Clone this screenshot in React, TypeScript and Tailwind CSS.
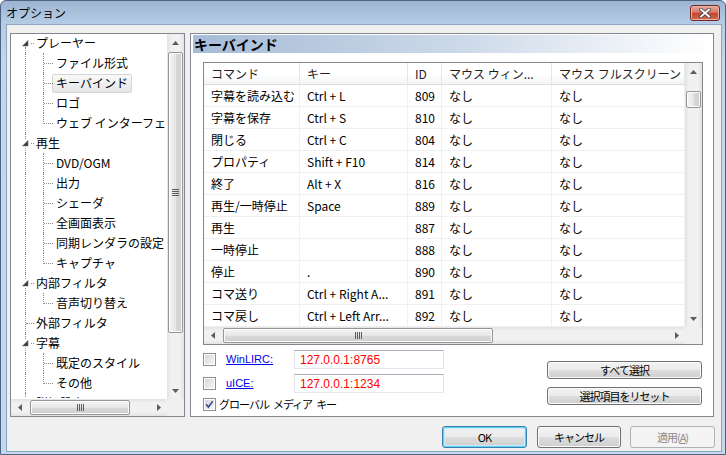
import React from "react";

const JP = "font-['Noto_Sans_CJK_JP','Noto_Sans',sans-serif]";
const GOTH = "text-[11px] tracking-[-1px]";

type Node = { t: string; lvl: 0 | 1; exp?: boolean; last?: boolean; sel?: boolean; first?: boolean };

const tree: Node[] = [
  { t: "プレーヤー", lvl: 0, exp: true, first: true },
  { t: "ファイル形式", lvl: 1 },
  { t: "キーバインド", lvl: 1, sel: true },
  { t: "ロゴ", lvl: 1 },
  { t: "ウェブ インターフェース", lvl: 1, last: true },
  { t: "再生", lvl: 0, exp: true },
  { t: "DVD/OGM", lvl: 1 },
  { t: "出力", lvl: 1 },
  { t: "シェーダ", lvl: 1 },
  { t: "全画面表示", lvl: 1 },
  { t: "同期レンダラの設定", lvl: 1 },
  { t: "キャプチャ", lvl: 1, last: true },
  { t: "内部フィルタ", lvl: 0, exp: true },
  { t: "音声切り替え", lvl: 1, last: true },
  { t: "外部フィルタ", lvl: 0 },
  { t: "字幕", lvl: 0, exp: true },
  { t: "既定のスタイル", lvl: 1 },
  { t: "その他", lvl: 1, last: true },
  { t: "詳細設定", lvl: 0 },
];

const rows: string[][] = [
  ["字幕を読み込む", "Ctrl + L", "809"],
  ["字幕を保存", "Ctrl + S", "810"],
  ["閉じる", "Ctrl + C", "804"],
  ["プロパティ", "Shift + F10", "814"],
  ["終了", "Alt + X", "816"],
  ["再生/一時停止", "Space", "889"],
  ["再生", "", "887"],
  ["一時停止", "", "888"],
  ["停止", ".", "890"],
  ["コマ送り", "Ctrl + Right A...", "891"],
  ["コマ戻し", "Ctrl + Left Arr...", "892"],
];

function Arrow({ dir }: { dir: "up" | "down" | "left" | "right" }) {
  const pts = {
    up: "0,4 3.5,0 7,4",
    down: "0,0 7,0 3.5,4",
    left: "4,0 4,7 0,3.5",
    right: "0,0 0,7 4,3.5",
  }[dir];
  const vert = dir === "up" || dir === "down";
  return (
    <div className="w-[17px] h-[17px] flex items-center justify-center shrink-0">
      <svg width={vert ? 7 : 4} height={vert ? 4 : 7}>
        <polygon points={pts} fill="#5c5c5c" />
      </svg>
    </div>
  );
}

function VGrip() {
  return (
    <div className="flex flex-col gap-[1px]">
      {[0, 1, 2, 3].map((i) => (
        <div key={i} className="w-[7px] h-[1px] bg-[#5a5a5a]" />
      ))}
    </div>
  );
}

function HGrip() {
  return (
    <div className="flex flex-row gap-[1px]">
      {[0, 1, 2, 3].map((i) => (
        <div key={i} className="w-[1px] h-[7px] bg-[#5a5a5a]" />
      ))}
    </div>
  );
}

const vTrack = "bg-[linear-gradient(to_right,#e3e3e3,#f1f1f1_25%,#f1f1f1_75%,#e3e3e3)]";
const hTrack = "bg-[linear-gradient(to_bottom,#e3e3e3,#f1f1f1_25%,#f1f1f1_75%,#e3e3e3)]";
const vThumb =
  "mx-[1px] rounded-[2px] border border-[#959595] bg-[linear-gradient(to_right,#f5f5f5,#e6e6e6_50%,#d9d9d9_51%,#cecece)] shadow-[inset_0_0_0_1px_#fbfbfb] flex items-center justify-center";
const hThumb =
  "my-[1px] rounded-[2px] border border-[#959595] bg-[linear-gradient(to_bottom,#f5f5f5,#e6e6e6_50%,#d9d9d9_51%,#cecece)] shadow-[inset_0_0_0_1px_#fbfbfb] flex items-center justify-center";

function TreeRow({ n }: { n: Node }) {
  const dot = "border-dotted border-[#8c8c8c]";
  return (
    <div className="relative h-[20px] flex items-center whitespace-nowrap shrink-0">
      <span
        className={`absolute left-[14px] w-0 border-l ${dot} ${n.first ? "top-[14px] bottom-0" : "top-0 bottom-0"}`}
      />
      {n.lvl === 1 && (
        <>
          <span className={`absolute left-[32px] w-0 border-l ${dot} top-0 ${n.last ? "h-[11px]" : "bottom-0"}`} />
          <span className={`absolute left-[33px] top-[10px] w-[9px] h-0 border-t ${dot}`} />
        </>
      )}
      {n.lvl === 0 && n.exp && (
        <>
          <span className="absolute left-[11px] top-[7px] w-[7px] h-[7px] bg-white flex">
            <svg width="7" height="7">
              <polygon points="6,0.5 6,6 0.5,6" fill="#3a3a3a" stroke="#6b6b6b" strokeWidth="0.6" />
            </svg>
          </span>
          <span className={`absolute left-[20px] top-[10px] w-[3px] h-0 border-t ${dot}`} />
        </>
      )}
      {n.lvl === 0 && !n.exp && <span className={`absolute left-[15px] top-[10px] w-[8px] h-0 border-t ${dot}`} />}
      {n.lvl === 0 ? (
        <span className="pl-[25px] text-[12px] leading-none">{n.t}</span>
      ) : n.sel ? (
        <span className="ml-[41px] px-[3px] h-[19px] flex items-center rounded-[2px] border border-[#d4d4d4] bg-[linear-gradient(to_bottom,#f9f9f9,#e6e6e6)] text-[12px] leading-none">
          {n.t}
        </span>
      ) : (
        <span className="pl-[45px] text-[12px] leading-none">{n.t}</span>
      )}
    </div>
  );
}

function Tree() {
  return (
    <div className="w-[175px] h-[384px] border border-[#828790] bg-white flex flex-col shrink-0">
      <div className="flex h-[365px]">
        <div className="w-[156px] h-[365px] overflow-hidden flex flex-col -mt-px">
          {tree.map((n, i) => (
            <TreeRow key={i} n={n} />
          ))}
        </div>
        <div className={`w-[17px] h-[365px] flex flex-col ${vTrack}`}>
          <Arrow dir="up" />
          <div className={`mt-[1px] h-[281px] ${vThumb}`}>
            <VGrip />
          </div>
          <div className="flex-1" />
          <Arrow dir="down" />
        </div>
      </div>
      <div className="flex h-[17px]">
        <div className={`w-[156px] h-[17px] flex flex-row ${hTrack}`}>
          <Arrow dir="left" />
          <div className={`ml-[2px] w-[100px] ${hThumb}`}>
            <HGrip />
          </div>
          <div className="flex-1" />
          <Arrow dir="right" />
        </div>
        <div className="w-[17px] h-[17px] bg-[#f0f0f0]" />
      </div>
    </div>
  );
}

const headers = ["コマンド", "キー", "ID", "マウス ウィン...", "マウス フルスクリーン"];

function Table() {
  const cols = "grid grid-cols-[96px_108px_34px_110px_133px]";
  return (
    <div className="mt-[9px] ml-[12px] w-[500px] border border-[#828790] flex flex-col">
      <div className="flex h-[264px]">
        <div className="w-[481px] overflow-hidden">
          <div className={`${cols} h-[22px]`}>
            {headers.map((h, i) => (
              <div
                key={i}
                className="h-[22px] pl-[7px] flex items-center whitespace-nowrap overflow-hidden border-r border-r-[#e3e6ea] border-b border-b-[#dcdcdc] bg-[linear-gradient(to_bottom,#ffffff,#ffffff_55%,#f2f3f5)] text-[12px] text-[#1e1e1e]"
              >
                {h}
              </div>
            ))}
          </div>
          {rows.map((r, ri) => (
            <div key={ri} className={`${cols} h-[22px]`}>
              {[r[0], r[1], r[2], "なし", "なし"].map((c, ci) => (
                <div
                  key={ci}
                  className="h-[22px] pl-[7px] flex items-center whitespace-nowrap overflow-hidden border-r border-b border-[#f0f0f0] text-[12px]"
                >
                  {c}
                </div>
              ))}
            </div>
          ))}
        </div>
        <div className={`w-[17px] h-[264px] flex flex-col ${vTrack}`}>
          <Arrow dir="up" />
          <div className={`mt-[11px] h-[17px] ${vThumb}`} />
          <div className="flex-1" />
          <Arrow dir="down" />
        </div>
      </div>
      <div className="flex h-[17px]">
        <div className={`w-[481px] h-[17px] flex flex-row ${hTrack}`}>
          <Arrow dir="left" />
          <div className={`ml-[2px] w-[270px] ${hThumb}`}>
            <HGrip />
          </div>
          <div className="flex-1" />
          <Arrow dir="right" />
        </div>
        <div className="w-[17px] h-[17px] bg-[#f0f0f0]" />
      </div>
    </div>
  );
}

function Checkbox({ checked }: { checked?: boolean }) {
  return (
    <div className="w-[13px] h-[13px] border border-[#8e8f8f] bg-white p-[1px] shrink-0">
      <div className="w-full h-full bg-[linear-gradient(135deg,#d6d6d6,#f6f6f6)] flex items-center justify-center">
        {checked && (
          <svg width="9" height="9" viewBox="0 0 9 9">
            <path d="M1.2 4.2 L3.4 7 L7.8 1.2" fill="none" stroke="#3f5193" strokeWidth="1.7" />
          </svg>
        )}
      </div>
    </div>
  );
}

function Btn({
  children,
  className = "",
  focus,
  disabled,
}: {
  children: React.ReactNode;
  className?: string;
  focus?: boolean;
  disabled?: boolean;
}) {
  const base = `flex items-center justify-center rounded-[3px] border ${GOTH} leading-none shrink-0`;
  const style = disabled
    ? "border-[#adb2b5] bg-[#f4f4f4] text-[#8a8a8a]"
    : focus
    ? "border-[#3c7fb1] bg-[linear-gradient(to_bottom,#f2f2f2,#ebebeb_50%,#dddddd_51%,#cfcfcf)] shadow-[inset_0_0_0_1px_#5fd2f4,inset_0_0_0_2px_#c4eefb]"
    : "border-[#707070] bg-[linear-gradient(to_bottom,#f2f2f2,#ebebeb_50%,#dddddd_51%,#cfcfcf)] shadow-[inset_0_0_0_1px_#fbfbfb]";
  return <div className={`${base} ${style} ${className}`}>{children}</div>;
}

function RightPanel() {
  return (
    <div className="w-[524px] h-[384px] border border-[#828790] bg-white flex flex-col shrink-0">
      <div className="mt-[1px] mx-[2px] h-[18px] pl-[1px] flex items-center bg-[linear-gradient(to_right,#a6bcd7,#cbd8e8_50%,#ffffff)] text-[14px] font-bold leading-none">
        キーバインド
      </div>
      <Table />
      <div className="mt-[5px] ml-[12px] mr-[11px] flex justify-between">
        <div className="flex flex-col">
          <div className="flex items-center h-[19px]">
            <Checkbox />
            <span className="ml-[10px] w-[68px] font-['Liberation_Sans',sans-serif] text-[11px] text-[#0000ee] underline">
              WinLIRC:
            </span>
            <div className="w-[150px] h-[19px] border border-[#abadb3] border-l-[#e2e3ea] border-r-[#dbdfe6] border-b-[#e3e9ef] pl-[5px] flex items-center font-['Liberation_Sans_Narrow','Liberation_Sans',sans-serif] text-[12px] text-[#ff0000]">
              127.0.0.1:8765
            </div>
          </div>
          <div className="flex items-center h-[19px] mt-[5px]">
            <Checkbox />
            <span className="ml-[10px] w-[68px] font-['Liberation_Sans',sans-serif] text-[11px] text-[#0000ee] underline">
              uICE:
            </span>
            <div className="w-[150px] h-[19px] border border-[#abadb3] border-l-[#e2e3ea] border-r-[#dbdfe6] border-b-[#e3e9ef] pl-[5px] flex items-center font-['Liberation_Sans_Narrow','Liberation_Sans',sans-serif] text-[12px] text-[#ff0000]">
              127.0.0.1:1234
            </div>
          </div>
          <div className="flex items-center h-[16px] mt-[3px]">
            <Checkbox checked />
            <span className={`ml-[3px] ${GOTH} flex gap-[4px]`}>
              <span>グローバル</span>
              <span>メディア</span>
              <span>キー</span>
            </span>
          </div>
        </div>
        <div className="flex flex-col gap-[8px] pt-[11px]">
          <Btn className="w-[155px] h-[18px]">すべて選択</Btn>
          <Btn className="w-[155px] h-[18px]">選択項目をリセット</Btn>
        </div>
      </div>
    </div>
  );
}

function CloseBtn() {
  return (
    <div className="w-[30px] h-[16px] rounded-[3px] border border-[#6e2a22] bg-[linear-gradient(to_bottom,#e8a79a,#d67b6a_45%,#c5452f_50%,#cf6a52)] shadow-[inset_0_0_0_1px_#eab3a8] flex items-center justify-center">
      <svg width="12" height="10" viewBox="0 0 12 10">
        <path d="M2 1.5 L10 8.5 M10 1.5 L2 8.5" stroke="#4a4a4a" strokeWidth="3.6" strokeLinecap="square" />
        <path d="M2 1.5 L10 8.5 M10 1.5 L2 8.5" stroke="#ffffff" strokeWidth="1.8" strokeLinecap="square" />
      </svg>
    </div>
  );
}

export default function App() {
  return (
    <div className={`${JP} w-[726px] h-[455px] text-black`}>
      <div className="w-[726px] h-[455px] flex flex-col border border-[#4d6482] rounded-t-[6px] overflow-hidden bg-[linear-gradient(to_bottom,#9db5d2_0px,#b7cde6_24px,#c2d6ec_60px,#c5d8ee_100%)]">
        <div className="h-[23px] flex items-center pl-[5px] pr-[5px] shrink-0">
          <span className="flex-1 text-[12px] leading-none pt-[1px]">オプション</span>
          <CloseBtn />
        </div>
        <div className="flex-1 ml-[5px] mr-[3px] mb-[2px] border border-[#8ea5c0] bg-[#f0f0f0] flex flex-col pt-[8px]">
          <div className="flex h-[384px] gap-[5px] pl-[3px]">
            <Tree />
            <RightPanel />
          </div>
          <div className="flex justify-end mt-[9px] pr-[6px] h-[22px]">
            <Btn focus className="w-[85px] h-[22px]">OK</Btn>
            <Btn className="w-[84px] h-[22px] ml-[10px]">キャンセル</Btn>
            <Btn disabled className="w-[85px] h-[22px] ml-[9px]">
              適用(<u>A</u>)
            </Btn>
          </div>
        </div>
      </div>
    </div>
  );
}
